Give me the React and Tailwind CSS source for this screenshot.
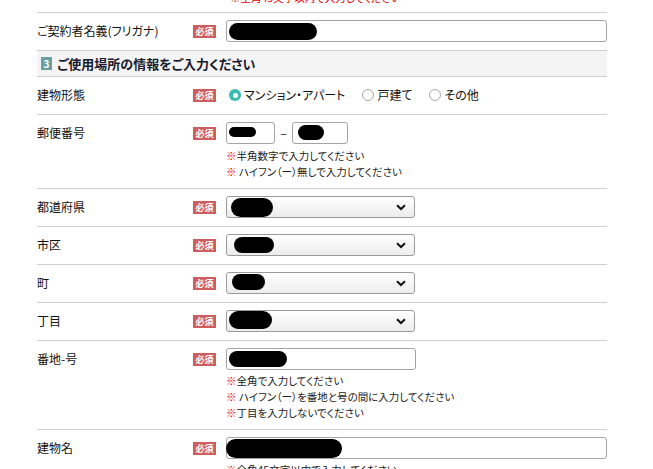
import React from 'react';

const font = "font-['Noto_Sans_CJK_JP','Noto_Sans',sans-serif] [font-feature-settings:'palt']";

const Badge = () => (
    <div className="w-[33px] h-[22px] flex items-center shrink-0">
        <span className="w-[23px] h-[13px] bg-[#d05d5d] text-white text-[9px] leading-[13px] text-center font-bold">必須</span>
    </div>
);

// redacted value scribble
const Blob = ({ className }) => <div className={`absolute bg-black rounded-full ${className}`} />;

const Notes = ({ items, className = '' }) => (
    <div className={`text-[10.5px] leading-[16px] text-[#222] ${className}`}>
        {items.map((t) => (
            <div key={t}><span className="text-[#e00000]">※</span>{t}</div>
        ))}
    </div>
);

const Row = ({ label, children }) => (
    <div className="flex pt-[7px] pb-[8px] border-b border-[#cfcfcf]">
        <div className="w-[156px] shrink-0 text-[12px] leading-[22px] text-[#111]">{label}</div>
        <Badge />
        <div className="flex-1">{children}</div>
    </div>
);

const TextBox = ({ className = '', children }) => (
    <div className={`relative h-[22px] border border-[#a3a3a3] rounded-[3px] bg-white ${className}`}>{children}</div>
);

const FakeSelect = ({ children }) => (
    <div className="relative w-[189px] h-[22px] border border-[#9a9a9a] rounded-[3px] bg-gradient-to-b from-white to-[#ececec]">
        {children}
        <svg className="absolute right-[8px] top-[7px]" width="10" height="7" viewBox="0 0 10 7">
            <path d="M1 1.2 L5 5 L9 1.2" fill="none" stroke="#111" strokeWidth="2" />
        </svg>
    </div>
);

const Radio = ({ checked, label }) => (
    <label className="flex items-center gap-[3px] mr-[17px]">
        {checked ? (
            <span className="w-[12px] h-[12px] rounded-full bg-[#3bbcb0] flex items-center justify-center">
                <span className="w-[5px] h-[5px] rounded-full bg-white" />
            </span>
        ) : (
            <span className="w-[12px] h-[12px] rounded-full border border-[#a8a8a8] bg-white" />
        )}
        <span>{label}</span>
    </label>
);

export default function App() {
    return (
        <div className={`bg-white w-[653px] h-[469px] overflow-hidden pl-[37px] pr-[46px] ${font}`}>
            <div className="-mt-[10px] pl-[193px] text-[10.5px] leading-[16px] text-[#e00000]">※全角45文字以内で入力してください</div>
            <div className="mt-[6px] border-t border-[#cfcfcf]">
                <Row label="ご契約者名義(フリガナ)">
                    <TextBox>
                        <Blob className="left-[2px] top-[2px] w-[88px] h-[17px]" />
                    </TextBox>
                </Row>

                <div className="h-[26px] bg-[#f4f4f4] border-b border-[#cfcfcf] flex items-center pl-[4px] gap-[5px]">
                    <span className="w-[11px] h-[13px] bg-[#6a9fa2] text-white text-[10px] leading-[13px] text-center font-bold">3</span>
                    <span className="text-[13px] font-bold text-[#1a1a2e]">ご使用場所の情報をご入力ください</span>
                </div>

                <Row label="建物形態">
                    <div className="h-[22px] flex items-center text-[12px] text-[#111] pl-[3px]">
                        <Radio checked label="マンション・アパート" />
                        <Radio label="戸建て" />
                        <Radio label="その他" />
                    </div>
                </Row>

                <Row label="郵便番号">
                    <div className="flex items-center">
                        <TextBox className="w-[49px]">
                            <Blob className="left-[2px] top-[4px] w-[27px] h-[10px]" />
                        </TextBox>
                        <span className="w-[17px] text-center text-[12px] text-[#111]">–</span>
                        <TextBox className="w-[56px]">
                            <Blob className="left-[5px] top-[2px] w-[26px] h-[15px]" />
                        </TextBox>
                    </div>
                    <Notes className="mt-[4px]" items={['半角数字で入力してください', ' ハイフン（ー）無しで入力してください']} />
                </Row>

                <Row label="都道府県">
                    <FakeSelect>
                        <Blob className="left-[4px] top-[1px] w-[42px] h-[19px] rounded-[8px]" />
                    </FakeSelect>
                </Row>
                <Row label="市区">
                    <FakeSelect>
                        <Blob className="left-[7px] top-[2px] w-[40px] h-[16px]" />
                    </FakeSelect>
                </Row>
                <Row label="町">
                    <FakeSelect>
                        <Blob className="left-[5px] top-[1px] w-[33px] h-[16px] rounded-[7px]" />
                    </FakeSelect>
                </Row>
                <Row label="丁目">
                    <FakeSelect>
                        <Blob className="left-[2px] top-[0px] w-[43px] h-[18px] rounded-[8px]" />
                    </FakeSelect>
                </Row>

                <Row label="番地-号">
                    <TextBox className="w-[190px]">
                        <Blob className="left-[2px] top-[2px] w-[58px] h-[16px]" />
                    </TextBox>
                    <Notes className="mt-[3px]" items={['全角で入力してください', ' ハイフン（ー）を番地と号の間に入力してください', '丁目を入力しないでください']} />
                </Row>

                <Row label="建物名">
                    <TextBox>
                        <Blob className="-left-[1px] top-[1px] w-[116px] h-[19px] rounded-[9px]" />
                    </TextBox>
                    <Notes className="mt-[3px]" items={['全角45文字以内で入力してください']} />
                </Row>
            </div>
        </div>
    );
}
